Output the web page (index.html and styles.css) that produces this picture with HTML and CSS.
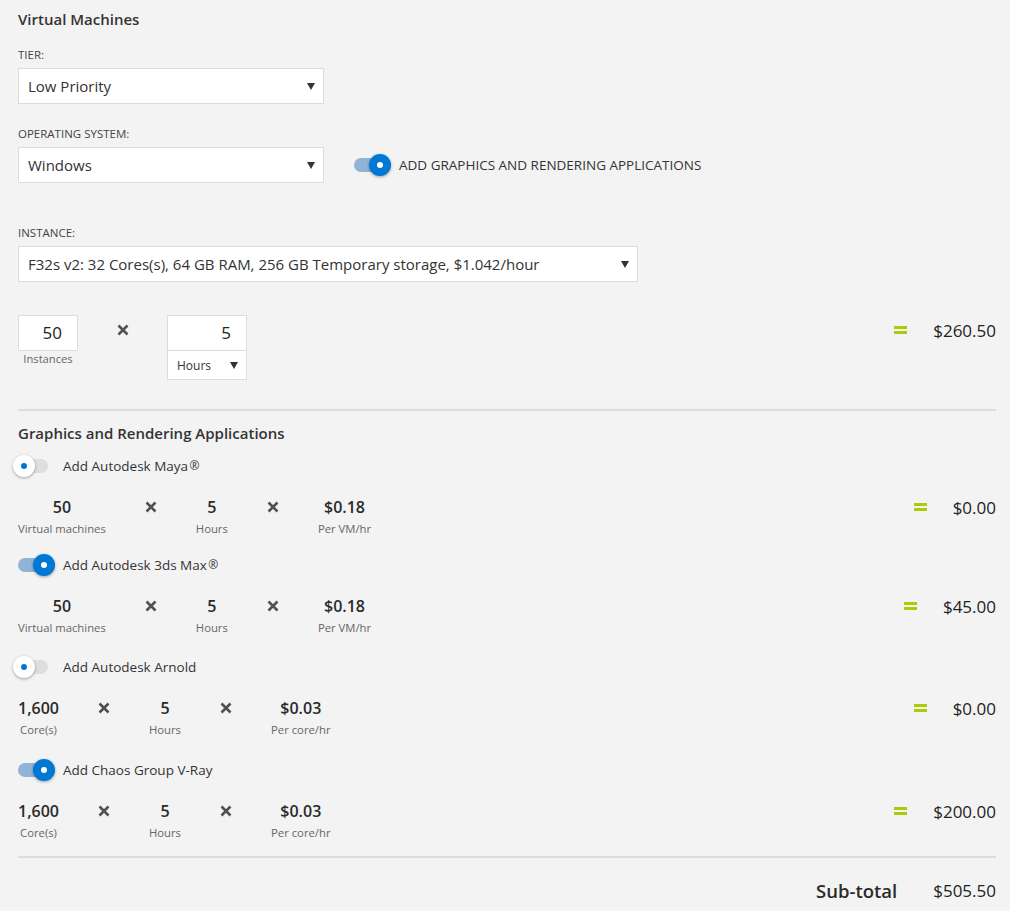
FILE: index.html
```html
<!DOCTYPE html>
<html lang="en">
<head>
<meta charset="utf-8">
<title>Virtual Machines</title>
<link rel="stylesheet" href="styles.css">
</head>
<body>
<div class="page">
  <h2 class="section-title">Virtual Machines</h2>

  <div class="field tier">
    <div class="field-label">TIER:</div>
    <div class="select w-tier"><span>Low Priority</span><svg class="caret" width="8" height="7" viewBox="0 0 8 7"><path d="M0 0H8L4 7Z"/></svg></div>
  </div>

  <div class="field os">
    <div class="field-label">OPERATING SYSTEM:</div>
    <div class="os-row">
      <div class="select w-tier"><span>Windows</span><svg class="caret" width="8" height="7" viewBox="0 0 8 7"><path d="M0 0H8L4 7Z"/></svg></div>
      <div class="toggle-line">
        <div class="toggle on"><div class="knob"><div class="dot"></div></div></div>
        <span class="toggle-label">ADD GRAPHICS AND RENDERING APPLICATIONS</span>
      </div>
    </div>
  </div>

  <div class="field instance">
    <div class="field-label">INSTANCE:</div>
    <div class="select w-instance"><span>F32s v2: 32 Cores(s), 64 GB RAM, 256 GB Temporary storage, $1.042/hour</span><svg class="caret" width="8" height="7" viewBox="0 0 8 7"><path d="M0 0H8L4 7Z"/></svg></div>
  </div>

  <div class="calc-row">
    <div class="qty">
      <div class="num-input w-qty">50</div>
      <div class="qty-label">Instances</div>
    </div>
    <div class="times-cell"><svg width="12" height="12" viewBox="0 0 12 12"><path d="M1.5 1.5L10.5 10.5M10.5 1.5L1.5 10.5"/></svg></div>
    <div class="hours">
      <div class="num-input w-hours">5</div>
      <div class="hours-select"><span>Hours</span><svg class="caret" width="8" height="7" viewBox="0 0 8 7"><path d="M0 0H8L4 7Z"/></svg></div>
    </div>
    <div class="total big">
      <span class="equals"></span>
      <span class="amount">$260.50</span>
    </div>
  </div>

  <div class="divider first"></div>

  <h2 class="section-title apps-title">Graphics and Rendering Applications</h2>

  <div class="app">
    <div class="toggle-line app-toggle app-1">
      <div class="toggle"><div class="knob"><div class="dot"></div></div></div>
      <span class="toggle-label">Add Autodesk Maya <span class="reg">®</span></span>
    </div>
    <div class="metrics">
      <div class="metric"><span class="metric-value">50</span><span class="metric-label">Virtual machines</span></div>
      <div class="metric-times"><svg width="12" height="12" viewBox="0 0 12 12"><path d="M1.5 1.5L10.5 10.5M10.5 1.5L1.5 10.5"/></svg></div>
      <div class="metric"><span class="metric-value">5</span><span class="metric-label">Hours</span></div>
      <div class="metric-times"><svg width="12" height="12" viewBox="0 0 12 12"><path d="M1.5 1.5L10.5 10.5M10.5 1.5L1.5 10.5"/></svg></div>
      <div class="metric"><span class="metric-value">$0.18</span><span class="metric-label">Per VM/hr</span></div>
      <div class="total"><span class="equals"></span><span class="amount">$0.00</span></div>
    </div>
  </div>

  <div class="app">
    <div class="toggle-line app-toggle app-2">
      <div class="toggle on"><div class="knob"><div class="dot"></div></div></div>
      <span class="toggle-label">Add Autodesk 3ds Max <span class="reg">®</span></span>
    </div>
    <div class="metrics">
      <div class="metric"><span class="metric-value">50</span><span class="metric-label">Virtual machines</span></div>
      <div class="metric-times"><svg width="12" height="12" viewBox="0 0 12 12"><path d="M1.5 1.5L10.5 10.5M10.5 1.5L1.5 10.5"/></svg></div>
      <div class="metric"><span class="metric-value">5</span><span class="metric-label">Hours</span></div>
      <div class="metric-times"><svg width="12" height="12" viewBox="0 0 12 12"><path d="M1.5 1.5L10.5 10.5M10.5 1.5L1.5 10.5"/></svg></div>
      <div class="metric"><span class="metric-value">$0.18</span><span class="metric-label">Per VM/hr</span></div>
      <div class="total"><span class="equals"></span><span class="amount">$45.00</span></div>
    </div>
  </div>

  <div class="app">
    <div class="toggle-line app-toggle app-3">
      <div class="toggle"><div class="knob"><div class="dot"></div></div></div>
      <span class="toggle-label">Add Autodesk Arnold</span>
    </div>
    <div class="metrics">
      <div class="metric"><span class="metric-value">1,600</span><span class="metric-label">Core(s)</span></div>
      <div class="metric-times"><svg width="12" height="12" viewBox="0 0 12 12"><path d="M1.5 1.5L10.5 10.5M10.5 1.5L1.5 10.5"/></svg></div>
      <div class="metric"><span class="metric-value">5</span><span class="metric-label">Hours</span></div>
      <div class="metric-times"><svg width="12" height="12" viewBox="0 0 12 12"><path d="M1.5 1.5L10.5 10.5M10.5 1.5L1.5 10.5"/></svg></div>
      <div class="metric"><span class="metric-value">$0.03</span><span class="metric-label">Per core/hr</span></div>
      <div class="total"><span class="equals"></span><span class="amount">$0.00</span></div>
    </div>
  </div>

  <div class="app">
    <div class="toggle-line app-toggle app-4">
      <div class="toggle on"><div class="knob"><div class="dot"></div></div></div>
      <span class="toggle-label">Add Chaos Group V-Ray</span>
    </div>
    <div class="metrics">
      <div class="metric"><span class="metric-value">1,600</span><span class="metric-label">Core(s)</span></div>
      <div class="metric-times"><svg width="12" height="12" viewBox="0 0 12 12"><path d="M1.5 1.5L10.5 10.5M10.5 1.5L1.5 10.5"/></svg></div>
      <div class="metric"><span class="metric-value">5</span><span class="metric-label">Hours</span></div>
      <div class="metric-times"><svg width="12" height="12" viewBox="0 0 12 12"><path d="M1.5 1.5L10.5 10.5M10.5 1.5L1.5 10.5"/></svg></div>
      <div class="metric"><span class="metric-value">$0.03</span><span class="metric-label">Per core/hr</span></div>
      <div class="total"><span class="equals"></span><span class="amount">$200.00</span></div>
    </div>
  </div>

  <div class="divider last"></div>

  <div class="subtotal-row">
    <span class="subtotal-label">Sub-total</span>
    <span class="subtotal-amount">$505.50</span>
  </div>
</div>
</body>
</html>
```

FILE: styles.css
```css
* { box-sizing: border-box; }

body {
  margin: 0;
  background: #f3f3f3;
  font-family: "Open Sans", "Noto Sans", "DejaVu Sans", sans-serif;
  color: #333;
}

.page {
  padding: 8px 14px 0 18px;
}

.section-title {
  margin: 0;
  font-size: 15px;
  font-weight: 600;
  line-height: 22px;
  color: #333;
}

.field-label {
  font-size: 11.5px;
  line-height: 16px;
  color: #444;
  margin-bottom: 5px;
}

.tier { margin-top: 17px; }
.os { margin-top: 22px; }
.instance { margin-top: 42px; }

.select {
  height: 36px;
  background: #fff;
  border: 1px solid #dcdcdc;
  display: flex;
  align-items: center;
  justify-content: space-between;
  padding: 0 8px 0 9px;
  font-size: 15px;
  color: #333;
}

.w-tier { width: 306px; }
.w-instance { width: 620px; }

.caret { fill: #333; flex: none; }

.os-row {
  display: flex;
  align-items: center;
  gap: 30px;
}

.toggle-line {
  display: flex;
  align-items: center;
  height: 24px;
}

.toggle {
  position: relative;
  flex: none;
  width: 30px;
  height: 14px;
  border-radius: 7px;
  background: #dedede;
}

.toggle.on { background: #8fb4d6; }

.knob {
  position: absolute;
  top: -4px;
  left: -5px;
  width: 22px;
  height: 22px;
  border-radius: 50%;
  background: #fff;
  box-shadow: 0 1px 3px rgba(0, 0, 0, 0.35);
  display: flex;
  align-items: center;
  justify-content: center;
}

.toggle.on .knob {
  left: 15px;
  background: #0078d4;
}

.dot {
  width: 6px;
  height: 6px;
  border-radius: 50%;
  background: #0078d4;
}

.toggle.on .dot { background: #fff; }

.toggle-label {
  margin-left: 15px;
  font-size: 13.5px;
  color: #333;
  white-space: nowrap;
}

.reg {
  font-size: 12px;
  position: relative;
  top: -1px;
  margin-left: -2px;
}

.calc-row {
  display: flex;
  align-items: flex-start;
  margin-top: 33px;
}

.qty {
  width: 60px;
  display: flex;
  flex-direction: column;
  align-items: center;
}

.num-input {
  height: 36px;
  background: #fff;
  border: 1px solid #dcdcdc;
  text-align: right;
  padding-right: 15px;
  font-size: 17px;
  line-height: 34px;
  color: #222;
}

.w-qty { width: 60px; }
.w-hours { width: 80px; }

.qty-label {
  font-size: 11.2px;
  line-height: 16px;
  color: #666;
}

.times-cell {
  width: 89px;
  height: 30px;
  display: flex;
  align-items: center;
  justify-content: center;
}

svg path { stroke: #505050; stroke-width: 2.6; }
.caret path { stroke: none; }

.hours { width: 80px; }

.hours-select {
  height: 29px;
  background: #fff;
  border: 1px solid #dcdcdc;
  border-top: none;
  display: flex;
  align-items: center;
  justify-content: space-between;
  padding: 0 8px 0 9px;
  font-size: 12px;
  color: #333;
}

.total {
  margin-left: auto;
  display: flex;
  align-items: center;
  gap: 26px;
  height: 22px;
}

.total.big { height: 30px; }

.equals {
  width: 13px;
  height: 8px;
  border-top: 3px solid #a9cc0a;
  border-bottom: 3px solid #a9cc0a;
}

.amount {
  font-size: 17px;
  color: #222;
}

.divider {
  height: 2px;
  background: #dcdcdc;
}

.divider.first { margin-top: 29px; }
.divider.last { margin-top: 15px; }

.apps-title { margin-top: 11px; }

.app-toggle.app-1 { margin-top: 10px; }
.app-toggle.app-2 { margin-top: 16px; }
.app-toggle.app-3 { margin-top: 19px; }
.app-toggle.app-4 { margin-top: 20px; }

.metrics {
  display: flex;
  align-items: flex-start;
  margin-top: 18px;
}

.metric {
  display: flex;
  flex-direction: column;
  align-items: center;
}

.metric-value {
  font-size: 16px;
  font-weight: 600;
  line-height: 22px;
  color: #2a2a2a;
}

.metric-label {
  font-size: 11.3px;
  line-height: 16px;
  color: #666;
  margin-top: 3px;
}

.metric-times {
  width: 90px;
  height: 22px;
  display: flex;
  align-items: center;
  justify-content: center;
}

.subtotal-row {
  display: flex;
  justify-content: flex-end;
  align-items: center;
  gap: 36px;
  margin-top: 20px;
  height: 24px;
}

.subtotal-label {
  font-size: 18.5px;
  font-weight: 600;
  color: #2a2a2a;
}

.subtotal-amount {
  font-size: 17px;
  color: #222;
}
```
